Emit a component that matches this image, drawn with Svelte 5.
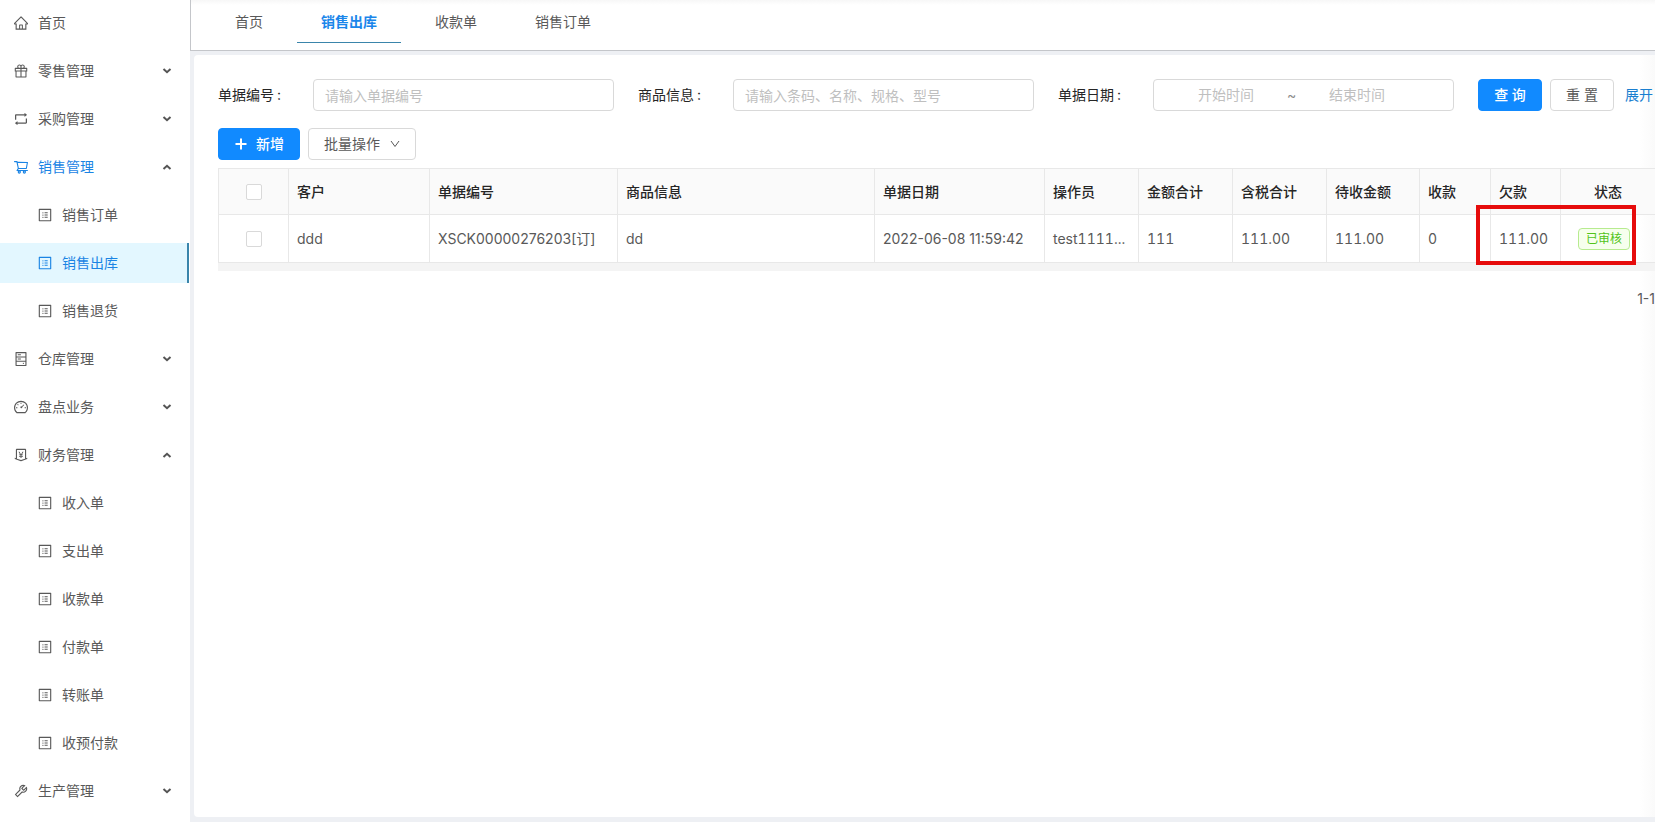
<script lang="ts">
	const icons: Record<string, string> = {
		home: "M946.5 505L560.1 118.8l-25.9-25.9a31.5 31.5 0 0 0-44.4 0L77.5 505a63.9 63.9 0 0 0-18.8 46c.4 35.2 29.7 63.3 64.9 63.3h42.5V940h691.8V614.3h43.4c17.1 0 33.2-6.7 45.3-18.8a63.6 63.6 0 0 0 18.7-45.3c0-17-6.7-33.1-18.8-45.2zM568 868H456V664h112v204zm217.9-325.7V868H632V640c0-22.1-17.9-40-40-40H432c-22.1 0-40 17.9-40 40v228H238.1V542.3h-96l370-369.7 23.1 23.1L882 542.3h-96.1z",
		gift: "M880 310H732.4c13.6-21.4 21.6-46.8 21.6-74 0-76.1-61.9-138-138-138-41.4 0-78.7 18.4-104 47.4-25.3-29-62.6-47.4-104-47.4-76.1 0-138 61.9-138 138 0 27.2 7.9 52.6 21.6 74H144c-17.7 0-32 14.3-32 32v200c0 4.4 3.6 8 8 8h40v344c0 17.7 14.3 32 32 32h640c17.7 0 32-14.3 32-32V550h40c4.4 0 8-3.6 8-8V342c0-17.7-14.3-32-32-32zm-334-74c0-38.6 31.4-70 70-70s70 31.4 70 70-31.4 70-70 70h-70v-70zm-138-70c38.6 0 70 31.4 70 70v70h-70c-38.6 0-70-31.4-70-70s31.4-70 70-70zM180 482V378h298v104H180zm48 68h250v308H228V550zm568 308H546V550h250v308zm48-376H546V378h298v104z",
		retweet: "M136 552h63.6c4.4 0 8-3.6 8-8V288.7h528.6v72.6c0 1.9.6 3.7 1.8 5.2a8.3 8.3 0 0 0 11.7 1.4L893 255.4c4.3-5 3.6-10.3 0-13.2L749.7 129.8a8.22 8.22 0 0 0-5.2-1.8c-4.6 0-8.4 3.8-8.4 8.4V209H199.7c-39.5 0-71.7 32.2-71.7 71.8V544c0 4.4 3.6 8 8 8zm752-80h-63.6c-4.4 0-8 3.6-8 8v255.3H287.8v-72.6c0-1.9-.6-3.7-1.8-5.2a8.3 8.3 0 0 0-11.7-1.4L131 768.6c-4.3 5-3.6 10.3 0 13.2l143.3 112.4c1.4 1.2 3.3 1.8 5.2 1.8 4.6 0 8.4-3.8 8.4-8.4V815h536.6c39.5 0 71.7-32.2 71.7-71.8V480c-.2-4.4-3.8-8-8.2-8z",
		cart: "M922.9 701.9H327.4l29.9-60.9 496.8-.9c16.8 0 31.2-12 34.2-28.6l68.8-385.1c1.8-10.1-.9-20.5-7.5-28.4a34.99 34.99 0 0 0-26.6-12.5l-632-2.1-5.4-25.4c-3.4-16.2-18-28-34.6-28H96.5a35.3 35.3 0 1 0 0 70.6h125.9L246 312.8l58.1 281.3-74.8 122.1a34.96 34.96 0 0 0-3 36.8c6 11.9 18.1 19.4 31.5 19.4h62.8a102.43 102.43 0 0 0-20.6 61.7c0 56.6 46 102.6 102.6 102.6s102.6-46 102.6-102.6c0-22.3-7.4-44-20.6-61.7h161.1a102.43 102.43 0 0 0-20.6 61.7c0 56.6 46 102.6 102.6 102.6s102.6-46 102.6-102.6c0-22.3-7.4-44-20.6-61.7H923c19.4 0 35.3-15.8 35.3-35.3a35.42 35.42 0 0 0-35.4-35.2zM305.7 253l575.8 1.9-56.4 315.8-452.3.8L305.7 253zm96.9 612.7c-17.4 0-31.6-14.2-31.6-31.6 0-17.4 14.2-31.6 31.6-31.6s31.6 14.2 31.6 31.6a31.6 31.6 0 0 1-31.6 31.6zm325.1 0c-17.4 0-31.6-14.2-31.6-31.6 0-17.4 14.2-31.6 31.6-31.6s31.6 14.2 31.6 31.6a31.6 31.6 0 0 1-31.6 31.6z",
		profile: "M880 112H144c-17.7 0-32 14.3-32 32v736c0 17.7 14.3 32 32 32h736c17.7 0 32-14.3 32-32V144c0-17.7-14.3-32-32-32zm-40 728H184V184h656v656zM484 336h200v64H484zM484 480h200v64H484zM484 624h200v64H484zM340 368a40 40 0 1 0 80 0 40 40 0 1 0-80 0zm0 144a40 40 0 1 0 80 0 40 40 0 1 0-80 0zm0 144a40 40 0 1 0 80 0 40 40 0 1 0-80 0z",
		hdd: "M832 64H192c-17.7 0-32 14.3-32 32v832c0 17.7 14.3 32 32 32h640c17.7 0 32-14.3 32-32V96c0-17.7-14.3-32-32-32zm-600 72h560v208H232V136zm560 480H232V408h560v208zm0 272H232V680h560v208zM304 208h200v64H304zM304 480h200v64H304zM624 784a40 40 0 1 0 80 0 40 40 0 1 0-80 0z",
		dashboard: "M924.8 385.6a446.7 446.7 0 0 0-96-142.4 446.7 446.7 0 0 0-142.4-96C631.1 123.8 572.5 112 512 112s-119.1 11.8-174.4 35.2a446.7 446.7 0 0 0-142.4 96 446.7 446.7 0 0 0-96 142.4C75.8 440.9 64 499.5 64 560c0 132.7 58.3 257.7 159.9 343.1l1.7 1.4c5.8 4.8 13.1 7.5 20.6 7.5h531.7c7.5 0 14.8-2.7 20.6-7.5l1.7-1.4C901.7 817.7 960 692.7 960 560c0-60.5-11.9-119.1-35.2-174.4zM761.4 836H262.6A371.1 371.1 0 0 1 136 560a376 376 0 0 1 752 0c0 105.6-44.5 205.6-126.6 276zM484 232h56v88h-56zM192 530h88v56h-88zM744 530h88v56h-88zM266 354l40-40 58 58-40 40zM680 348l42 42-128 128a62 62 0 1 1-42-42z",
		money: "M911.5 700.7a8 8 0 0 0-10.3-4.8L840 718.2V180c0-37.6-30.4-68-68-68H252c-37.6 0-68 30.4-68 68v538.2l-61.3-22.3c-.9-.3-1.8-.5-2.7-.5-4.4 0-8 3.6-8 8V763c0 3.3 2.1 6.3 5.3 7.5L501 910.1c7.1 2.6 14.8 2.6 21.9 0l383.8-139.5c3.2-1.2 5.3-4.2 5.3-7.5v-59.6c0-1-.2-1.9-.5-2.8zM512 837.5l-256-93.1V184h512v560.4l-256 93.1zM352 308h68l92 172 92-172h68L572 484h64v48h-92v46h92v48h-92v70h-64v-70h-92v-48h92v-46h-92v-48h64z",
		tool: "M876.6 239.5c-.5-.9-1.2-1.8-2-2.5-5-5-13.1-5-18.1 0L684.2 409.3l-67.9-67.9L788.7 169c.8-.8 1.4-1.6 2-2.5 3.6-6.1 1.6-13.9-4.5-17.5-98.2-58-226.8-44.7-311.3 39.7-67 67-89.2 162-66.5 247.4l-293 293c-3 3-2.8 7.9.3 11l169.7 169.7c3.1 3.1 8.1 3.3 11 .3l292.9-292.9c85.5 22.8 180.5.7 247.6-66.4 84.4-84.5 97.7-213.1 39.7-311.3zM786 499.8c-58.1 58.1-145.3 69.3-214.6 33.6l-8.8 8.8-.1-.1-274 274.1-79.2-79.2 230.1-230.1s0 .1.1.1l52.8-52.8c-35.7-69.3-24.5-156.5 33.6-214.6a184.2 184.2 0 0 1 144-53.5L537 318.9a32.05 32.05 0 0 0 0 45.3l124.5 124.5a32.05 32.05 0 0 0 45.3 0l132.8-132.8c3.7 51.8-14.4 104.8-53.6 143.9z",
	};

	let menus = $state([
		{ title: "零售管理", icon: "gift", open: false, children: [] as string[] },
		{ title: "采购管理", icon: "retweet", open: false, children: [] },
		{ title: "销售管理", icon: "cart", open: true, children: ["销售订单", "销售出库", "销售退货"] },
		{ title: "仓库管理", icon: "hdd", open: false, children: [] },
		{ title: "盘点业务", icon: "dashboard", open: false, children: [] },
		{
			title: "财务管理",
			icon: "money",
			open: true,
			children: ["收入单", "支出单", "收款单", "付款单", "转账单", "收预付款"],
		},
		{ title: "生产管理", icon: "tool", open: false, children: [] },
	]);

	let current = $state("销售出库");
	const tabs = ["首页", "销售出库", "收款单", "销售订单"];

	const columns = [
		{ title: "客户", width: 141 },
		{ title: "单据编号", width: 188 },
		{ title: "商品信息", width: 257 },
		{ title: "单据日期", width: 170 },
		{ title: "操作员", width: 94 },
		{ title: "金额合计", width: 94 },
		{ title: "含税合计", width: 94 },
		{ title: "待收金额", width: 93 },
		{ title: "收款", width: 71 },
		{ title: "欠款", width: 70 },
		{ title: "状态", width: 95 },
	];
	const rows = [
		["ddd", "XSCK00000276203[订]", "dd", "2022-06-08 11:59:42", "test1111...", "111", "111.00", "111.00", "0", "111.00"],
	];
</script>

{#snippet icon(name: string)}
	<svg class="icon" viewBox="64 64 896 896" aria-hidden="true"><path fill-rule="evenodd" d={icons[name]} /></svg>
{/snippet}

<div class="layout">
	<nav class="sider">
		<ul>
			<li>
				<a class="item" href="#home">{@render icon("home")}<span>首页</span></a>
			</li>
			{#each menus as menu}
				<li>
					<button
						type="button"
						class="item"
						class:active={menu.children.includes(current)}
						aria-expanded={menu.open}
						onclick={() => (menu.open = !menu.open)}
					>
						{@render icon(menu.icon)}<span>{menu.title}</span>
						<svg class="arrow" class:up={menu.open} viewBox="0 0 10 6" aria-hidden="true">
							<path d="M1.5 1l3.5 3.2L8.500 1" />
						</svg>
					</button>
					{#if menu.open && menu.children.length}
						<ul>
							{#each menu.children as child}
								<li>
									<a
										class="item sub"
										class:selected={child === current}
										href="#{child}"
										onclick={() => (current = child)}
									>
										{@render icon("profile")}<span>{child}</span>
									</a>
								</li>
							{/each}
						</ul>
					{/if}
				</li>
			{/each}
		</ul>
	</nav>

	<div class="main">
		<header class="tabs">
			{#each tabs as tab}
				<a class="tab" class:on={tab === "销售出库"} href="#{tab}">{tab}</a>
			{/each}
		</header>

		<main class="panel">
			<form class="search" onsubmit={(e) => e.preventDefault()}>
				<div class="field">
					<label for="number">单据编号</label>
					<input id="number" class="box" type="text" placeholder="请输入单据编号" />
				</div>
				<div class="field">
					<label for="goods">商品信息</label>
					<input id="goods" class="box" type="text" placeholder="请输入条码、名称、规格、型号" />
				</div>
				<div class="field">
					<label for="start">单据日期</label>
					<div class="box range">
						<input id="start" type="text" placeholder="开始时间" />
						<span>~</span>
						<input type="text" placeholder="结束时间" aria-label="结束时间" />
					</div>
				</div>
				<div class="actions">
					<button type="submit" class="btn primary">查 询</button>
					<button type="reset" class="btn">重 置</button>
					<a class="more" href="#more">展开</a>
				</div>
			</form>

			<div class="toolbar">
				<button type="button" class="btn primary">
					<svg class="plus" viewBox="0 0 14 14" aria-hidden="true"><path d="M7 1.500v11M1.500 7h11" /></svg>
					新增
				</button>
				<button type="button" class="btn batch">
					批量操作
					<svg class="down" viewBox="0 0 10 10" aria-hidden="true"><path d="M1 2l4 5.500L9 2" /></svg>
				</button>
			</div>

			<div class="table-wrap">
				<table>
					<colgroup>
						<col style="width: 70px" />
						{#each columns as col}
							<col style="width: {col.width}px" />
						{/each}
					</colgroup>
					<thead>
						<tr>
							<th class="center"><input type="checkbox" aria-label="全选" /></th>
							{#each columns as col}
								<th class:center={col.title === "状态"}>{col.title}</th>
							{/each}
						</tr>
					</thead>
					<tbody>
						{#each rows as row}
							<tr>
								<td class="center"><input type="checkbox" aria-label={row[1]} /></td>
								{#each row as cell, i}
									<td class:num={i > 3}>{cell}</td>
								{/each}
								<td class="center"><span class="tag">已审核</span></td>
							</tr>
						{/each}
					</tbody>
				</table>
				<div class="scrollbar"></div>
				<div class="mark"></div>
			</div>

			<div class="pager">1-1</div>
		</main>
	</div>
</div>

<style>
	:global(body) {
		margin: 0;
	}

	.layout {
		display: flex;
		min-height: 100vh;
		overflow: hidden;
		background: #eef0f4;
		color: #595959;
		font-family: Inter, "Noto Sans CJK SC", sans-serif;
		font-size: 14px;
		line-height: 22px;
	}
	.layout * {
		box-sizing: border-box;
	}
	a {
		color: inherit;
		text-decoration: none;
	}
	button,
	input {
		font: inherit;
		color: inherit;
	}

	/* side menu */
	.sider {
		flex: none;
		width: 190px;
		padding-top: 3px;
		background: #fff;
	}
	ul {
		margin: 0;
		padding: 0;
		list-style: none;
	}
	.item {
		display: flex;
		align-items: center;
		gap: 10px;
		width: 100%;
		height: 40px;
		margin-bottom: 8px;
		padding: 0 18px 0 14px;
		border: none;
		background: none;
		text-align: left;
		cursor: pointer;
	}
	.item.sub {
		padding-left: 38px;
	}
	.item.active > .icon,
	.item.active > span {
		color: #1a84e4;
	}
	.item.selected {
		width: 189px;
		border-right: 2px solid #3a85ab;
		background: #e3f7ff;
		color: #1a84e4;
	}
	.icon {
		flex: none;
		width: 14px;
		height: 14px;
		fill: currentColor;
	}
	.arrow {
		width: 10px;
		height: 6px;
		margin-left: auto;
		fill: none;
		stroke: #555;
		stroke-width: 2;
	}
	.arrow.up {
		transform: rotate(180deg);
	}

	/* tabs */
	.main {
		display: flex;
		flex: 1;
		flex-direction: column;
		min-width: 0;
	}
	.tabs {
		display: flex;
		gap: 10px;
		height: 51px;
		padding-left: 20px;
		border-left: 1px solid #c4c6ca;
		border-bottom: 1px solid #c4c6ca;
		background: linear-gradient(#f7f7f7, #fff 5px);
	}
	.tab {
		height: 43px;
		padding: 11px 24px 0;
	}
	.tab.on {
		border-bottom: 1px solid #3a85ab;
		color: #1a86ea;
		font-weight: 600;
	}

	.panel {
		flex: 1;
		margin: 4px 0 5px 4px;
		padding: 24px 0 0 24px;
		border-radius: 4px 0 0 4px;
		background: linear-gradient(to left, #fafafa, #fff 16px);
	}

	/* search form */
	.search {
		display: flex;
		margin-bottom: 17px;
	}
	.field {
		display: flex;
		flex: 1;
		align-items: center;
		min-width: 0;
		padding-right: 24px;
	}
	label {
		flex: none;
		width: 95px;
		color: #262626;
	}
	label::after {
		content: ":";
		margin-left: 3px;
	}
	.box {
		flex: 1;
		min-width: 0;
		height: 32px;
		padding: 0 11px;
		border: 1px solid #d9d9d9;
		border-radius: 4px;
		background: #fff;
	}
	.range {
		display: flex;
		align-items: center;
	}
	.range input {
		width: 44%;
		padding: 0;
		border: none;
		background: none;
		text-align: center;
	}
	.range span {
		color: #8c8c8c;
	}
	::placeholder {
		color: #bfbfbf;
		opacity: 1;
	}
	.actions {
		display: flex;
		flex: none;
		align-items: center;
		gap: 8px;
		width: 177px;
		white-space: nowrap;
	}
	.more {
		padding-left: 3px;
		color: #1a7fd0;
	}
	.btn {
		display: flex;
		align-items: center;
		justify-content: center;
		gap: 8px;
		min-width: 64px;
		height: 32px;
		padding: 0 15px;
		border: 1px solid #d9d9d9;
		border-radius: 4px;
		background: #fff;
		cursor: pointer;
	}
	.btn.primary {
		border-color: #118aff;
		background: #118aff;
		color: #fff;
		font-weight: 500;
	}
	.btn.batch {
		gap: 10px;
	}
	.toolbar {
		display: flex;
		gap: 8px;
		margin-bottom: 8px;
	}
	.plus,
	.down {
		fill: none;
		stroke: currentColor;
	}
	.plus {
		width: 14px;
		height: 14px;
		stroke-width: 2;
	}
	.down {
		width: 10px;
		height: 10px;
	}

	/* table */
	.table-wrap {
		position: relative;
	}
	table {
		width: 100%;
		table-layout: fixed;
		border-collapse: collapse;
	}
	th,
	td {
		overflow: hidden;
		padding: 0 8px;
		border: 1px solid #e8e8e8;
		text-align: left;
		text-overflow: ellipsis;
		white-space: nowrap;
	}
	th {
		height: 46px;
		background: #fafafa;
		color: #262626;
		font-weight: 500;
	}
	td {
		height: 48px;
	}
	.num {
		font-variant-numeric: tabular-nums;
	}
	.center {
		text-align: center;
	}
	input[type="checkbox"] {
		display: block;
		width: 16px;
		height: 16px;
		margin: 0 auto;
		border: 1px solid #d9d9d9;
		border-radius: 2px;
		background: #fff;
		appearance: none;
	}
	input[type="checkbox"]:checked {
		border-color: #118aff;
		background: #118aff;
	}
	.tag {
		display: inline-block;
		margin-right: 8px;
		padding: 0 7px;
		border: 1px solid #b7eb8f;
		border-radius: 4px;
		background: #f6ffed;
		color: #52c41a;
		font-size: 12px;
		line-height: 20px;
	}
	.scrollbar {
		height: 8px;
		background: #f4f4f4;
	}
	.mark {
		position: absolute;
		top: 37px;
		right: 19px;
		width: 160px;
		height: 60px;
		border: 4px solid #e60c0c;
		pointer-events: none;
	}
	.pager {
		margin-top: 17px;
		text-align: right;
	}
</style>
